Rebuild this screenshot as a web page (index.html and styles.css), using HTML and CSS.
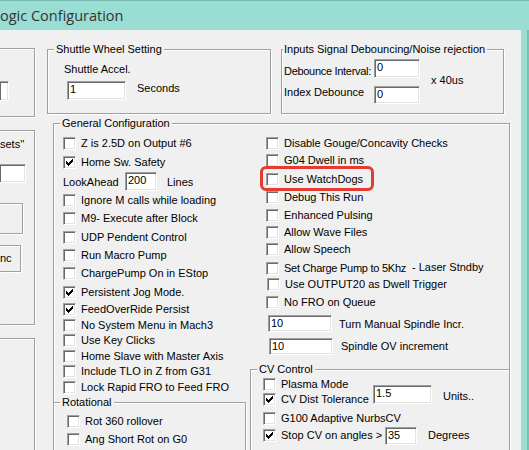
FILE: index.html
```html
<!DOCTYPE html>
<html>
<head>
<meta charset="utf-8">
<title>Logic Configuration</title>
<link rel="stylesheet" href="styles.css">
</head>
<body>
<div class="window">
  <div class="titlebar"><span class="title">ogic Configuration</span></div>
  <div class="frame">
    <div class="client">
      <div class="leftcol">
        <div class="lbox lbox1"><div class="tb tb-cut tb-l1"></div></div>
        <div class="lbox lbox2">
          <div class="ltext">sets''</div>
          <div class="tb tb-cut tb-l2"></div>
          <div class="btn btn1"></div>
          <div class="btn btn2">nc</div>
        </div>
        <div class="lbox lbox3"></div>
      </div>
      <div class="maincol">
        <div class="toprow">
          <div class="group shuttle">
            <div class="gtitle">Shuttle Wheel Setting</div>
            <div class="sh-label">Shuttle Accel.</div>
            <div class="sh-row"><div class="tb tb-sh">1</div><span class="sh-sec">Seconds</span></div>
          </div>
          <div class="group inputs">
            <div class="gtitle gtitle-tight">Inputs Signal Debouncing/Noise rejection</div>
            <div class="inp-body">
              <div class="inp-col">
                <div class="inp-row r1"><span class="inp-label l1">Debounce Interval:</span><div class="tb tb-inp">0</div></div>
                <div class="inp-row r2"><span class="inp-label">Index Debounce</span><div class="tb tb-inp2">0</div></div>
              </div>
              <span class="xus">x 40us</span>
            </div>
          </div>
        </div>
        <div class="group general">
          <div class="gtitle">General Configuration</div>
          <div class="gen-cols">
            <div class="gen-left">
              <div class="rows rows-left">
                <div class="row h19"><span class="cb"></span><span>Z is 2.5D on Output #6</span></div>
                <div class="row h16"><span class="cb"><svg class="chk" viewBox="0 0 11 11" width="11" height="11"><path d="M8 2h1v1h-1zM7 3h2v1h-2zM2 4h1v1h-1zM6 4h3v1h-3zM2 5h2v1h-2zM5 5h3v1h-3zM2 6h5v1h-5zM3 7h3v1h-3zM4 8h1v1h-1z"/></svg></span><span>Home Sw. Safety</span></div>
                <div class="row h22"><span class="la-label">LookAhead</span><div class="tb tb-la">200</div><span class="la-lines">Lines</span></div>
                <div class="row h18"><span class="cb"></span><span>Ignore M calls while loading</span></div>
                <div class="row h19"><span class="cb"></span><span>M9- Execute after Block</span></div>
                <div class="row h18"><span class="cb"></span><span>UDP Pendent Control</span></div>
                <div class="row h18"><span class="cb"></span><span>Run Macro Pump</span></div>
                <div class="row h19"><span class="cb"></span><span>ChargePump On in EStop</span></div>
                <div class="row h17"><span class="cb"><svg class="chk" viewBox="0 0 11 11" width="11" height="11"><path d="M8 2h1v1h-1zM7 3h2v1h-2zM2 4h1v1h-1zM6 4h3v1h-3zM2 5h2v1h-2zM5 5h3v1h-3zM2 6h5v1h-5zM3 7h3v1h-3zM4 8h1v1h-1z"/></svg></span><span>Persistent Jog Mode.</span></div>
                <div class="row h16"><span class="cb"><svg class="chk" viewBox="0 0 11 11" width="11" height="11"><path d="M8 2h1v1h-1zM7 3h2v1h-2zM2 4h1v1h-1zM6 4h3v1h-3zM2 5h2v1h-2zM5 5h3v1h-3zM2 6h5v1h-5zM3 7h3v1h-3zM4 8h1v1h-1z"/></svg></span><span>FeedOverRide Persist</span></div>
                <div class="row h15"><span class="cb"></span><span>No System Menu in Mach3</span></div>
                <div class="row h16"><span class="cb"></span><span>Use Key Clicks</span></div>
                <div class="row h15"><span class="cb"></span><span>Home Slave with Master Axis</span></div>
                <div class="row h16"><span class="cb"></span><span>Include TLO in Z from G31</span></div>
                <div class="row h21"><span class="cb"></span><span>Lock Rapid FRO to Feed FRO</span></div>
              </div>
              <div class="group rotational">
                <div class="gtitle">Rotational</div>
                <div class="rot-rows">
                  <div class="row h18"><span class="cb"></span><span>Rot 360 rollover</span></div>
                  <div class="row h18"><span class="cb"></span><span>Ang Short Rot on G0</span></div>
                </div>
              </div>
            </div>
            <div class="gen-right">
              <div class="rows rows-right">
                <div class="row h17"><span class="cb"></span><span>Disable Gouge/Concavity Checks</span></div>
                <div class="row h19"><span class="cb"></span><span>G04 Dwell in ms</span></div>
                <div class="row h18"><span class="cb"></span><span>Use WatchDogs</span></div>
                <div class="row h18"><span class="cb"></span><span>Debug This Run</span></div>
                <div class="row h17"><span class="cb"></span><span>Enhanced Pulsing</span></div>
                <div class="row h17"><span class="cb"></span><span>Allow Wave Files</span></div>
                <div class="row h19"><span class="cb"></span><span>Allow Speech</span></div>
                <div class="row h16"><span class="cb"></span><span class="sc-label">Set Charge Pump to 5Khz</span><span class="laser">- Laser Stndby</span></div>
                <div class="row h18"><span class="cb cb-nudge"></span><span>Use OUTPUT20 as Dwell Trigger</span></div>
                <div class="row h19"><span class="cb"></span><span>No FRO on Queue</span></div>
                <div class="row h23 tbrow1"><div class="tb tb-sp">10</div><span class="sp-label1">Turn Manual Spindle Incr.</span></div>
                <div class="row h31 tbrow2"><div class="tb tb-sp">10</div><span class="sp-label2">Spindle OV increment</span></div>
              </div>
              <div class="group cv">
                <div class="gtitle">CV Control</div>
                <div class="cv-rows">
                  <div class="row h15"><span class="cb"></span><span>Plasma Mode</span></div>
                  <div class="row h19"><span class="cb"><svg class="chk" viewBox="0 0 11 11" width="11" height="11"><path d="M8 2h1v1h-1zM7 3h2v1h-2zM2 4h1v1h-1zM6 4h3v1h-3zM2 5h2v1h-2zM5 5h3v1h-3zM2 6h5v1h-5zM3 7h3v1h-3zM4 8h1v1h-1z"/></svg></span><span class="cvd-label">CV Dist Tolerance</span><div class="tb tb-cvd">1.5</div><span class="units">Units..</span></div>
                  <div class="row h17"><span class="cb"></span><span>G100 Adaptive NurbsCV</span></div>
                  <div class="row h18"><span class="cb"><svg class="chk" viewBox="0 0 11 11" width="11" height="11"><path d="M8 2h1v1h-1zM7 3h2v1h-2zM2 4h1v1h-1zM6 4h3v1h-3zM2 5h2v1h-2zM5 5h3v1h-3zM2 6h5v1h-5zM3 7h3v1h-3zM4 8h1v1h-1z"/></svg></span><span class="stop-label">Stop CV on angles &gt;</span><div class="tb tb-stop">35</div><span class="degrees">Degrees</span></div>
                </div>
              </div>
            </div>
          </div>
        </div>
      </div>
    </div>
    <div class="rframe"></div>
  </div>
</div>
<div class="highlight"></div>
</body>
</html>
```

FILE: styles.css
```css
* { box-sizing: border-box; }
html, body { margin: 0; padding: 0; }
body {
  width: 529px;
  height: 450px;
  overflow: hidden;
  position: relative;
  background: #99ddd3;
  font-family: "Liberation Sans", Arial, sans-serif;
  font-size: 11px;
  line-height: 13px;
  color: #000;
}
.window { width: 529px; height: 450px; display: flex; flex-direction: column; }
.titlebar {
  height: 30px;
  flex: none;
  border-top: 1px solid #76b9af;
  background: #99ddd3;
  padding-top: 5px;
  font-family: "Open Sans", "Noto Sans", sans-serif;
  font-size: 14.5px;
  line-height: 19px;
  color: #333;
  white-space: nowrap;
}
.frame { flex: 1; display: flex; min-height: 0; }
.client {
  width: 521px;
  flex: none;
  background: #f0f0f0;
  display: flex;
  align-items: flex-start;
  overflow: hidden;
}
.rframe { flex: 1; background: #99ddd3; border-right: 2px solid #7cbfb5; }

/* generic controls */
.group {
  border: 1px solid #a0a0a0;
  box-shadow: inset 1px 1px #fff, 1px 1px #fff;
  flex: none;
}
.gtitle {
  margin-top: -7px;
  margin-left: 6px;
  padding: 0 2px;
  background: #f0f0f0;
  width: max-content;
  height: 13px;
  white-space: nowrap;
}
.gtitle-tight { margin-left: 1px; padding-left: 1px; }
.tb {
  flex: none;
  background: #fff;
  border-top: 1px solid #a0a0a0;
  border-left: 1px solid #a0a0a0;
  border-right: 1px solid #fff;
  border-bottom: 1px solid #fff;
  box-shadow: inset 1px 1px #696969, inset -1px -1px #e3e3e3;
  padding: 1px 0 0 2px;
  white-space: nowrap;
}
.tb-cut { border-left: none; }
.cb {
  display: block;
  flex: none;
  width: 13px;
  height: 13px;
  margin-right: 5px;
  background: #fff;
  border-top: 1px solid #a0a0a0;
  border-left: 1px solid #a0a0a0;
  border-right: 1px solid #fff;
  border-bottom: 1px solid #fff;
  box-shadow: inset 1px 1px #696969, inset -1px -1px #e3e3e3;
}
.chk { display: block; fill: #000; shape-rendering: crispEdges; }
.row { display: flex; align-items: flex-start; white-space: nowrap; }
.h15 { height: 15px; }
.h16 { height: 16px; }
.h17 { height: 17px; }
.h18 { height: 18px; }
.h19 { height: 19px; }
.h21 { height: 21px; }
.h22 { height: 22px; }
.h23 { height: 23px; }
.h31 { height: 31px; }

/* left partial column */
.leftcol { width: 35px; flex: none; display: flex; flex-direction: column; }
.lbox {
  border: 1px solid #a0a0a0;
  border-left: none;
  box-shadow: inset 0 1px #fff, 1px 1px #fff;
  flex: none;
}
.lbox1 { margin-top: 18px; height: 69px; padding-top: 32px; }
.tb-l1 { width: 9px; height: 20px; }
.lbox2 { margin-top: 13px; height: 195px; }
.ltext { margin-top: 7px; text-align: right; padding-right: 11px; }
.tb-l2 { margin-top: 13px; width: 26px; height: 19px; }
.btn {
  border: 1px solid #a0a0a0;
  border-left: none;
  box-shadow: 1px 1px #fff, inset 0 1px #fff;
}
.btn1 { margin-top: 20px; width: 23px; height: 31px; }
.btn2 { margin-top: 11px; width: 21px; height: 27px; padding: 6px 13px 0 0; text-align: right; }
.lbox3 { margin-top: 13px; height: 200px; }

/* main area */
.maincol { flex: none; width: 486px; padding-left: 12px; }
.toprow { display: flex; gap: 10px; margin-top: 19px; }
.shuttle { width: 224px; height: 65px; }
.sh-label { margin: 7px 0 0 16px; }
.sh-row { display: flex; align-items: flex-start; margin: 5px 0 0 19px; }
.tb-sh { width: 59px; height: 19px; }
.sh-sec { margin: 1px 0 0 11px; }

.inputs { width: 223px; height: 65px; }
.inp-body { display: flex; align-items: flex-start; margin-top: 3px; }
.inp-row { display: flex; align-items: flex-start; margin-left: 2px; }
.r1 { height: 27px; }
.r2 { height: 19px; }
.inp-label { width: 90px; flex: none; white-space: nowrap; }
.l1 { margin-top: 6px; letter-spacing: -0.3px; }
.tb-inp { width: 46px; height: 19px; }
.tb-inp2 { width: 46px; height: 18px; }
.xus { margin: 15px 0 0 11px; white-space: nowrap; }

.general { margin: 9px 0 0 6px; width: 457px; height: 400px; }
.gen-cols { display: flex; align-items: flex-start; gap: 4px; margin-left: -1px; }
.gen-left { width: 193px; flex: none; }
.gen-right { width: 260px; flex: none; }
.rows-left { padding: 7px 0 0 10px; }
.rows-right { padding: 7px 0 0 16px; }

.la-label { margin-top: 4px; width: 62px; flex: none; }
.tb-la { width: 32px; height: 19px; }
.la-lines { margin: 4px 0 0 10px; }

.rotational { width: 193px; height: 100px; }
.rot-rows { padding: 6px 0 0 13px; }

.sc-label { width: 128px; flex: none; letter-spacing: -0.25px; }
.laser { margin-top: -1px; }
.cb-nudge { margin-left: 1px; }
.tbrow1 { margin-left: 2px; }
.tbrow2 { margin-left: 3px; }
.tb-sp { width: 64px; height: 17px; }
.sp-label1 { margin: 3px 0 0 7px; }
.sp-label2 { margin: 2px 0 0 8px; }

.cv { width: 260px; height: 100px; }
.cv-rows { padding: 2px 0 0 12px; }
.cvd-label { width: 92px; flex: none; }
.tb-cvd { width: 59px; height: 19px; margin-top: -8px; }
.units { margin: -3px 0 0 11px; }
.stop-label { width: 104px; flex: none; }
.tb-stop { width: 32px; height: 18px; margin-top: -2px; }
.degrees { margin-left: 11px; }

/* annotation overlay */
.highlight {
  position: absolute;
  left: 260px;
  top: 166px;
  width: 114px;
  height: 25px;
  border: 3px solid #e53b31;
  border-radius: 6px;
}
```
